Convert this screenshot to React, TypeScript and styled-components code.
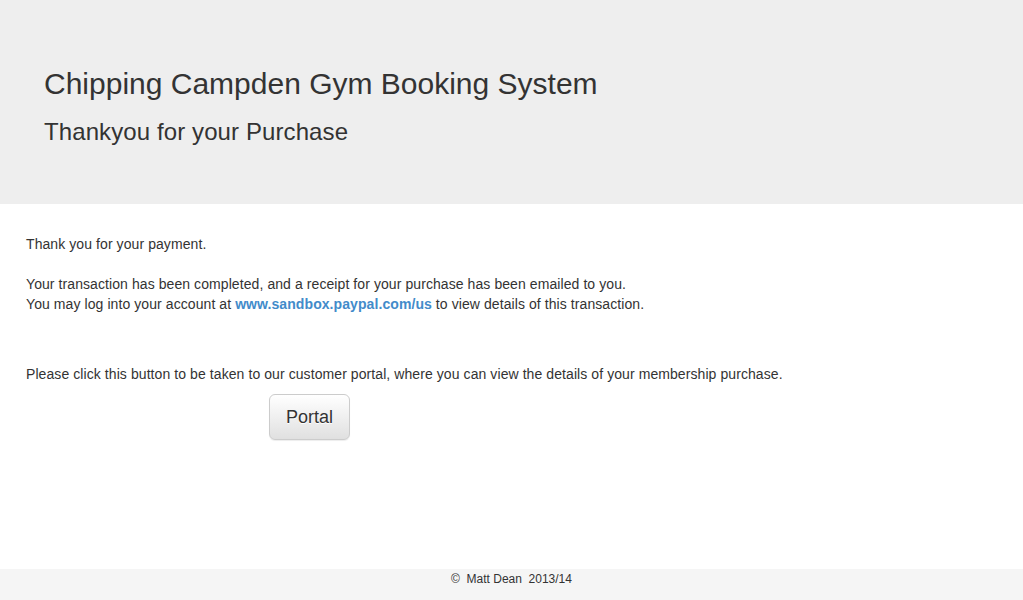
import React from "react";
import styled, { createGlobalStyle } from "styled-components";

const Global = createGlobalStyle`
  html, body { margin: 0; padding: 0; }
  body {
    font-family: "Liberation Sans", Arial, Helvetica, sans-serif;
    font-size: 14px;
    line-height: 20px;
    color: #333;
    background: #fff;
  }
`;

const Page = styled.div`
  min-height: 100vh;
  display: flex;
  flex-direction: column;
`;

const Jumbotron = styled.header`
  background: #eee;
  height: 204px;
  box-sizing: border-box;
  padding: 66px 44px 0;
`;

const Title = styled.h1`
  margin: 0;
  font-size: 30px;
  line-height: 36px;
  font-weight: 400;
  color: #333;
`;

const Subtitle = styled.h2`
  margin: 15px 0 0;
  font-size: 24px;
  line-height: 30px;
  font-weight: 400;
  letter-spacing: 0.1px;
  color: #333;
`;

const Content = styled.main`
  flex: 1;
  padding: 30px 26px 0;
  letter-spacing: 0.08px;
`;

const Para = styled.p<{ $gap?: number }>`
  margin: 0 0 ${(p) => p.$gap ?? 0}px;
`;

const Link = styled.a`
  color: #428bca;
  font-weight: 700;
  text-decoration: none;
`;

const ButtonRow = styled.div`
  padding-left: 243px;
  margin-top: 10px;
`;

const Button = styled.button`
  font-family: "Liberation Sans", Arial, Helvetica, sans-serif;
  font-size: 18px;
  line-height: 24px;
  padding: 10px 16px;
  color: #333;
  border: 1px solid #ccc;
  border-radius: 6px;
  background: linear-gradient(to bottom, #fff 0, #e0e0e0 100%);
  text-shadow: 0 1px 0 #fff;
  box-shadow: inset 0 1px 0 rgba(255, 255, 255, 0.15), 0 1px 1px rgba(0, 0, 0, 0.075);
  cursor: pointer;
`;

const Footer = styled.footer`
  background: #f5f5f5;
  height: 31px;
  box-sizing: border-box;
  padding-top: 2px;
  text-align: center;
  font-size: 12px;
  line-height: 16px;
  color: #333;
`;

export default function App() {
  return (
    <Page>
      <Global />
      <Jumbotron>
        <Title>Chipping Campden Gym Booking System</Title>
        <Subtitle>Thankyou for your Purchase</Subtitle>
      </Jumbotron>
      <Content>
        <Para $gap={20}>Thank you for your payment.</Para>
        <Para $gap={50}>
          Your transaction has been completed, and a receipt for your purchase has been emailed to you.
          <br />
          You may log into your account at <Link href="#">www.sandbox.paypal.com/us</Link> to view details of this transaction.
        </Para>
        <Para>
          Please click this button to be taken to our customer portal, where you can view the details of your membership purchase.
        </Para>
        <ButtonRow>
          <Button>Portal</Button>
        </ButtonRow>
      </Content>
      <Footer>©&nbsp; Matt Dean&nbsp; 2013/14</Footer>
    </Page>
  );
}
